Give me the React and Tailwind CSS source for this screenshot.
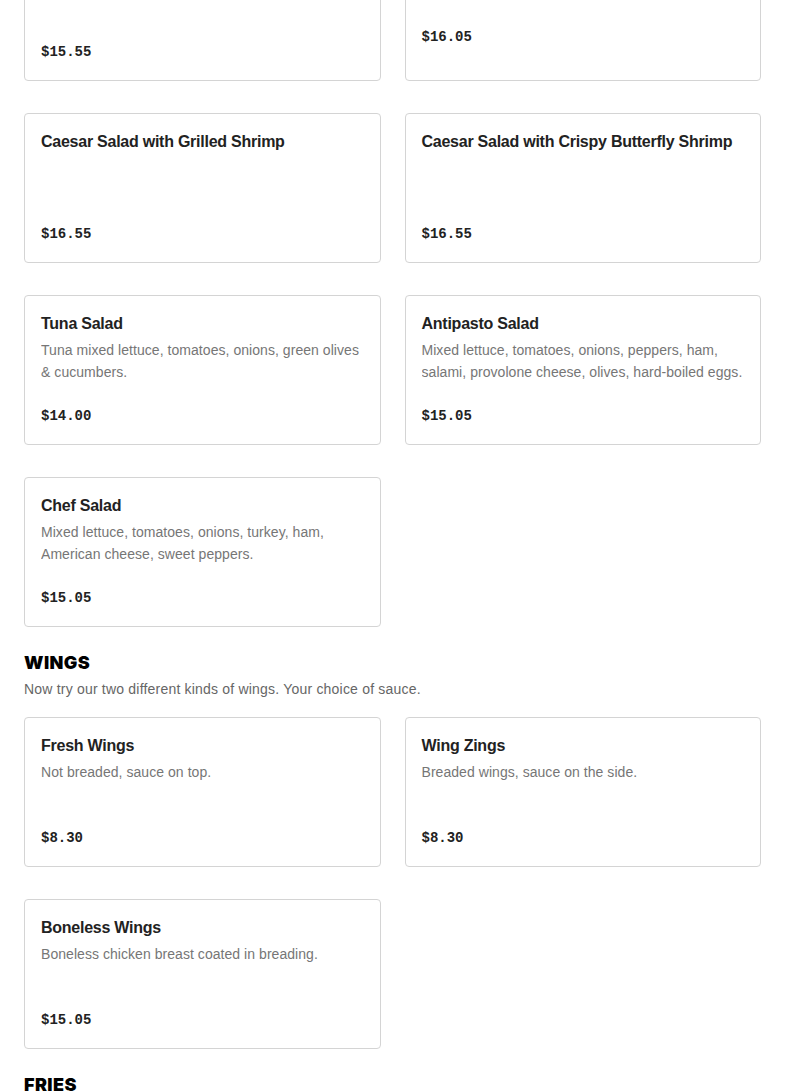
import React from "react";

const sans = { fontFamily: '"Liberation Sans", Arial, sans-serif' };

function Card({ name, desc, price, priceClass = "" }) {
  return (
    <div className="h-[150px] rounded-[4px] border border-[#d4d4d4] bg-white p-4 flex flex-col">
      {name && (
        <div className="text-[16px] leading-6 font-bold text-[#222222] tracking-[-0.25px]">{name}</div>
      )}
      {desc && (
        <div className="pt-[3px] text-[14px] leading-[22px] text-[#767676] line-clamp-2 tracking-[0.05px]">{desc}</div>
      )}
      <div
        className={`mt-auto text-[14px] leading-6 font-bold text-[#222222] ${priceClass}`}
        style={{ fontFamily: '"Liberation Mono", "Courier New", monospace' }}
      >
        {price}
      </div>
    </div>
  );
}

function Section({ title, desc }) {
  return (
    <div className="mt-6">
      <h2
        className="text-[18px] leading-6 font-black text-black tracking-[0.4px] uppercase"
        style={{ fontFamily: 'Inter, "Liberation Sans", sans-serif' }}
      >
        {title}
      </h2>
      {desc && <p className="pt-[3px] text-[14px] leading-[22px] text-[#666666] tracking-[0.2px]">{desc}</p>}
    </div>
  );
}

export default function App() {
  return (
    <div className="bg-white min-h-[1092px] h-[1092px] overflow-hidden px-6" style={sans}>
      <div className="-mt-[69px] grid grid-cols-2 gap-x-6 gap-y-8 w-[737px]">
        <Card price="$15.55" />
        <Card price="$16.05" priceClass="mb-[15px]" />
        <Card name="Caesar Salad with Grilled Shrimp" price="$16.55" />
        <Card name="Caesar Salad with Crispy Butterfly Shrimp" price="$16.55" />
        <Card
          name="Tuna Salad"
          desc="Tuna mixed lettuce, tomatoes, onions, green olives & cucumbers."
          price="$14.00"
        />
        <Card
          name="Antipasto Salad"
          desc="Mixed lettuce, tomatoes, onions, peppers, ham, salami, provolone cheese, olives, hard-boiled eggs."
          price="$15.05"
        />
        <Card
          name="Chef Salad"
          desc="Mixed lettuce, tomatoes, onions, turkey, ham, American cheese, sweet peppers."
          price="$15.05"
        />
      </div>
      <Section title="Wings" desc="Now try our two different kinds of wings. Your choice of sauce." />
      <div className="mt-[17px] grid grid-cols-2 gap-x-6 gap-y-8 w-[737px]">
        <Card name="Fresh Wings" desc="Not breaded, sauce on top." price="$8.30" />
        <Card name="Wing Zings" desc="Breaded wings, sauce on the side." price="$8.30" />
        <Card name="Boneless Wings" desc="Boneless chicken breast coated in breading." price="$15.05" />
      </div>
      <Section title="Fries" />
    </div>
  );
}
